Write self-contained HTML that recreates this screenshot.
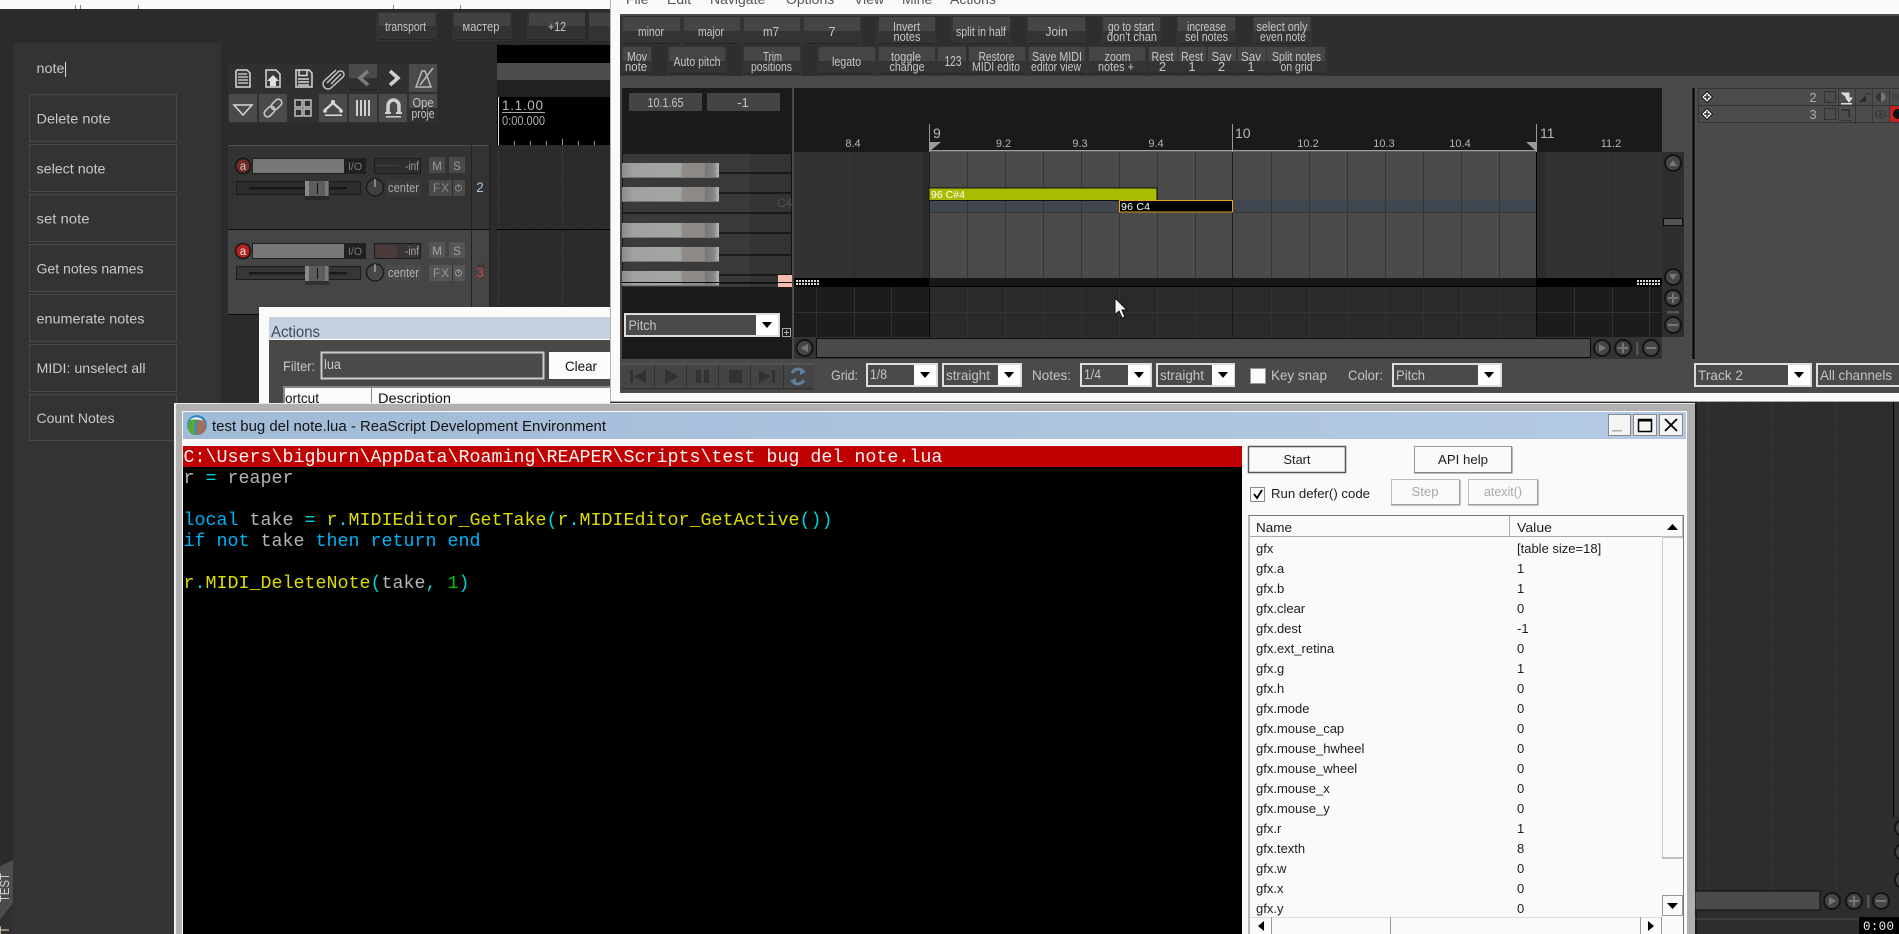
<!DOCTYPE html>
<html><head><meta charset="utf-8"><title>REAPER</title>
<style>
html,body{margin:0;padding:0;background:#2b2b2b;overflow:hidden}
svg{display:block;position:absolute;left:0;top:0}
text{font-family:"Liberation Sans",sans-serif;white-space:pre}
.l{font-size:14px;fill:#c9c9c9}
.b{font-size:13px;fill:#c6c6c6;text-anchor:middle}
.n{font-size:13px;fill:#1c1c1c}
.c{font-family:"Liberation Mono",monospace;font-size:18.33px}
.g{fill:#b4b4b4}.y{fill:#dcdc00}.k{fill:#00b0f4}.p{fill:#00d4d4}
.m{font-size:14px;fill:#c4c4c4}
.r{font-size:11px;fill:#b5b5b5;text-anchor:middle}
.t{font-size:11.5px;fill:#a9a9a9}
</style></head><body>
<svg width="1899" height="934" viewBox="0 0 1899 934" xmlns="http://www.w3.org/2000/svg">
<defs>
<linearGradient id="tb" x1="0" x2="1" y1="0" y2="0"><stop offset="0" stop-color="#a2bbd6"/><stop offset="1" stop-color="#b4cae4"/></linearGradient>
<linearGradient id="ky" x1="0" x2="1" y1="0" y2="0"><stop offset="0" stop-color="#8b8c8b"/><stop offset=".12" stop-color="#9fa29f"/><stop offset=".6" stop-color="#a3a5a3"/><stop offset=".63" stop-color="#8d8a88"/><stop offset=".85" stop-color="#8d8a88"/><stop offset=".86" stop-color="#777"/><stop offset=".95" stop-color="#888"/><stop offset="1" stop-color="#bbb"/></linearGradient>
<g id="ar"><rect width="22" height="20" fill="#fff"/><path d="M6 7h10l-5 6z" fill="#000"/></g>
<g id="rb"><circle r="8" fill="#464646" stroke="#141414" stroke-width="2"/></g>
<g id="kk"><rect width="97" height="15" fill="url(#ky)"/><rect y="14" width="97" height="1" fill="#777"/></g>
<g id="dm"><path d="M0 -5.5L5.5 0L0 5.5L-5.5 0z" fill="#fff" stroke="#111"/><path d="M-3 0H3M0 -3V3" stroke="#111" stroke-width="1.3"/></g>
</defs>

<!-- base -->
<rect width="1899" height="934" fill="#2b2b2b"/>
<rect width="610" height="9" fill="#fafafa"/>
<path d="M75.5 5V9M80.5 5V9M138.5 5V9M393.5 5V9M460.5 5V9" stroke="#888"/>

<!-- search panel -->
<rect x="13" y="43" width="208" height="891" fill="#343232"/>
<g fill="none" stroke="#484848">
<rect x="29.5" y="94.5" width="147" height="47"/><rect x="29.5" y="144.5" width="147" height="47"/><rect x="29.5" y="194.5" width="147" height="47"/><rect x="29.5" y="244.5" width="147" height="47"/><rect x="29.5" y="294.5" width="147" height="47"/><rect x="29.5" y="344.5" width="147" height="47"/><rect x="29.5" y="394.5" width="147" height="46"/>
</g>
<text class="l" x="36.5" y="73" textLength="28" lengthAdjust="spacingAndGlyphs">note</text>
<rect x="65" y="62" width="1" height="15" fill="#ddd"/>
<text class="l" x="36.5" y="123.5" textLength="74" lengthAdjust="spacingAndGlyphs">Delete note</text>
<text class="l" x="36.5" y="173.5" textLength="69" lengthAdjust="spacingAndGlyphs">select note</text>
<text class="l" x="36.5" y="223.5" textLength="53" lengthAdjust="spacingAndGlyphs">set note</text>
<text class="l" x="36.5" y="273.5" textLength="107" lengthAdjust="spacingAndGlyphs">Get notes names</text>
<text class="l" x="36.5" y="323.5" textLength="108" lengthAdjust="spacingAndGlyphs">enumerate notes</text>
<text class="l" x="36.5" y="373" textLength="109" lengthAdjust="spacingAndGlyphs">MIDI: unselect all</text>
<text class="l" x="36.5" y="423" textLength="78" lengthAdjust="spacingAndGlyphs">Count Notes</text>

<!-- TEST tab -->
<path d="M0 866L13 860V903L0 920z" fill="#4c4c4c"/>
<path d="M0 920L13 903V934H0z" fill="#2f2f2f"/>
<text transform="translate(9,902) rotate(-90)" font-size="13" fill="#cfcfcf" textLength="29" lengthAdjust="spacingAndGlyphs">TEST</text>
<text transform="translate(9,934) rotate(-90)" font-size="13" fill="#c8b8a8">T</text>

<!-- top buttons -->
<g>
<rect x="376" y="12" width="61" height="29" fill="#333"/><rect x="379" y="13" width="56" height="13" fill="#424242"/><rect x="379" y="39" width="56" height="1" fill="#252525"/>
<rect x="452" y="12" width="60" height="29" fill="#333"/><rect x="454" y="13" width="56" height="13" fill="#424242"/><rect x="454" y="39" width="56" height="1" fill="#252525"/>
<rect x="527" y="12" width="58" height="29" fill="#333"/><rect x="529" y="13" width="56" height="13" fill="#424242"/><rect x="529" y="39" width="56" height="1" fill="#252525"/>
<rect x="589" y="12" width="21" height="29" fill="#333"/><rect x="589" y="13" width="21" height="13" fill="#424242"/>
</g>
<text class="b" x="405.500" y="31" textLength="41" lengthAdjust="spacingAndGlyphs">transport</text>
<text class="b" x="481" y="31" textLength="37" lengthAdjust="spacingAndGlyphs" font-family="Liberation Sans">мастер</text>
<text class="b" x="557" y="31" textLength="18" lengthAdjust="spacingAndGlyphs">+12</text>

<!-- arrange top -->
<rect x="497" y="45" width="113" height="18" fill="#000"/>
<rect x="497" y="63" width="113" height="17" fill="#4c4c4c"/>
<rect x="497" y="80" width="113" height="17" fill="#212121"/>
<rect x="497" y="97" width="113" height="48" fill="#000"/>
<rect x="498" y="97" width="1" height="48" fill="#ddd"/>
<text x="502" y="110" font-size="13.500" fill="#b8b8b8" textLength="41" lengthAdjust="spacing">1.1.00</text>
<rect x="502" y="112" width="43" height="1" fill="#aaa"/>
<text x="502" y="125" font-size="12.500" fill="#b0b0b0" textLength="43" lengthAdjust="spacingAndGlyphs">0:00.000</text>
<path d="M514.500 141V145M530.500 141V145M546.500 141V145M562.500 139V145M578.500 141V145M594.500 141V145" stroke="#999"/>
<path d="M498.500 145V307M562.500 145V307" stroke="#4a4a4a" stroke-dasharray="1 2"/>
<path d="M514.500 145V307M530.500 145V307M546.500 145V307M578.500 145V307M594.500 145V307" stroke="#393939" stroke-dasharray="1 3"/>
<rect x="497" y="229" width="113" height="1" fill="#000"/>

<!-- toolbar -->
<rect x="228" y="63" width="210" height="60" fill="#303030"/>
<rect x="349" y="64" width="28" height="14" fill="#4a4a4a"/><rect x="349" y="89" width="28" height="1.500" fill="#242424"/>
<rect x="409" y="64" width="28" height="28" fill="#4a4a4a"/>
<rect x="229" y="94" width="28" height="28" fill="#4a4a4a"/><rect x="259" y="94" width="28" height="28" fill="#4a4a4a"/>
<rect x="319" y="94" width="28" height="28" fill="#4a4a4a"/><rect x="349" y="94" width="28" height="28" fill="#4a4a4a"/><rect x="379" y="94" width="28" height="28" fill="#4a4a4a"/>
<rect x="409" y="94" width="28" height="14" fill="#4a4a4a"/>
<g fill="none" stroke="#d8d8d8" stroke-width="1.500">
<path d="M237 70h10l3 3v14h-14V71z" fill="#3a3a3a"/><path d="M238 74h9M238 77h10M238 80h10M238 83h10" stroke-width="1.200"/>
<path d="M266 70h10l4 4v13h-14z" fill="#3a3a3a"/><path d="M273 75l6 6h-3v5h-6v-5h-3z" fill="#e0e0e0" stroke="none"/>
<path d="M296 70h13l3 3v14h-16z" fill="#3a3a3a"/><path d="M299 70.500v5h8v-5M298 79h11M298 82h11M298 85h11"/>
<path d="M327 83L338 72a3.500 3.500 0 0 1 5 5L331 88a5 5 0 0 1-7-7L336 70M331 84L341 74" stroke-width="1.400" stroke="#c8c8c8"/>
</g>
<path d="M368 71L360 78L368 85" fill="none" stroke="#7d7d7d" stroke-width="3.500"/>
<path d="M390 71L398 78L390 85" fill="none" stroke="#cfcfcf" stroke-width="3.500"/>
<path d="M416 87L422 71H425L431 87zM420 85L433 68" fill="none" stroke="#b8b8b8" stroke-width="1.500"/>
<path d="M234 105H252L243 115z" fill="none" stroke="#d8d8d8" stroke-width="1.500"/>
<g fill="none" stroke="#c8c8c8" stroke-width="1.600" transform="rotate(-45 273 108)"><rect x="262" y="104.500" width="12" height="7" rx="3.500"/><rect x="272" y="104.500" width="12" height="7" rx="3.500"/></g>
<g fill="none" stroke="#b8b8b8" stroke-width="1.600"><rect x="295" y="100" width="7" height="7"/><rect x="304" y="100" width="7" height="7"/><rect x="295" y="109" width="7" height="7"/><rect x="304" y="109" width="7" height="7"/></g>
<path d="M325 110L333 103L341 110" fill="none" stroke="#ddd" stroke-width="2.200"/><circle cx="333" cy="102" r="2" fill="#ddd"/><circle cx="325" cy="111" r="1.800" fill="#ddd"/><circle cx="341" cy="111" r="1.800" fill="#ddd"/><rect x="325" y="114.500" width="17" height="1.500" fill="#ddd"/>
<path d="M357 100v16M361 100v16M365 100v16M369 100v16" stroke="#cfcfcf" stroke-width="2"/>
<path d="M388 112V106a5.500 6 0 0 1 11 0V112" fill="none" stroke="#d0d0d0" stroke-width="3.500"/><rect x="385" y="112" width="6" height="2" fill="#ccc"/><rect x="396" y="112" width="6" height="2" fill="#ccc"/><rect x="386" y="116" width="15" height="1.500" fill="#ccc"/>
<text class="b" x="423" y="107" textLength="21" lengthAdjust="spacingAndGlyphs">Ope</text>
<text class="b" x="423" y="118" textLength="23" lengthAdjust="spacingAndGlyphs">proje</text>

<!-- track panel -->
<rect x="228" y="145" width="243" height="84" fill="#333"/>
<rect x="471" y="145" width="18" height="84" fill="#333"/>
<rect x="228" y="230" width="243" height="84" fill="#454545"/>
<rect x="471" y="230" width="18" height="84" fill="#454545"/>
<rect x="228" y="145" width="261" height="1" fill="#4f4f4f"/>
<rect x="228" y="229" width="261" height="1" fill="#0c0c0c"/>
<rect x="228" y="314" width="31" height="1" fill="#0c0c0c"/>
<rect x="471" y="145" width="1" height="169" fill="#222"/>
<rect x="489" y="145" width="1" height="169" fill="#222"/>
<rect x="477" y="263" width="8" height="6" fill="#3a3a3a" opacity=".7"/>

<g id="t2">
<rect x="252" y="158" width="114" height="16" fill="#202020"/><rect x="253" y="159" width="91" height="14" fill="#787878"/>
<circle cx="243" cy="166" r="7.500" fill="#6b2d26" stroke="#141414" stroke-width="1.500"/><text x="243" y="170" font-size="11.500" fill="#d8c0b8" text-anchor="middle">a</text>
<text x="355" y="170" font-size="11" fill="#7c7c7c" text-anchor="middle" textLength="14" lengthAdjust="spacingAndGlyphs">I/O</text>
<rect x="374.500" y="158.500" width="46" height="15" fill="#2d2d2d" stroke="#1d1d1d"/><rect x="376" y="165" width="23" height="1" fill="#3f3f3f"/>
<text x="419" y="170" font-size="11.500" fill="#9c9c9c" text-anchor="end" textLength="14" lengthAdjust="spacingAndGlyphs">-inf</text>
<rect x="429" y="157" width="16" height="16" fill="#494949"/><rect x="449" y="157" width="16" height="16" fill="#494949"/>
<text x="437" y="170" font-size="11.500" fill="#999" text-anchor="middle">M</text><text x="457" y="170" font-size="11.500" fill="#999" text-anchor="middle">S</text>
<rect x="236.500" y="181.500" width="124" height="13" fill="#2c2c2c" stroke="#1c1c1c"/><rect x="249" y="187" width="98" height="2.500" fill="#171717"/>
<rect x="305" y="196" width="24" height="4" fill="#1d1d1d" opacity=".5"/>
<rect x="305" y="181" width="24" height="15" fill="#5c5c5c"/><rect x="305" y="181" width="4" height="15" fill="#8a8a8a"/><rect x="325" y="181" width="3" height="15" fill="#7a7a7a"/><rect x="317" y="183" width="1" height="11" fill="#111"/>
<circle cx="375" cy="187.500" r="8.500" fill="#404040" stroke="#1c1c1c" stroke-width="1.500"/><rect x="374.500" y="179" width="1" height="8" fill="#ccc"/>
<rect x="386" y="180" width="35" height="16" fill="#393939"/>
<text x="388" y="192" font-size="13" fill="#a9a9a9" textLength="31" lengthAdjust="spacingAndGlyphs">center</text>
<rect x="429" y="180" width="36" height="16" fill="#494949"/><rect x="452" y="180" width="1" height="16" fill="#2a2a2a"/>
<text x="441" y="192" font-size="11.500" fill="#8c8c8c" text-anchor="middle" textLength="16">FX</text><circle cx="458.500" cy="188" r="3" fill="none" stroke="#888"/><rect x="458" y="184" width="1" height="4" fill="#888"/>
</g>
<text x="480" y="192" font-size="13.500" fill="#a8c4de" text-anchor="middle">2</text>

<g transform="translate(0,85)">
<rect x="252" y="158" width="114" height="16" fill="#202020"/><rect x="253" y="159" width="91" height="14" fill="#787878"/>
<circle cx="243" cy="166" r="7.500" fill="#b32222" stroke="#141414" stroke-width="1.500"/><text x="243" y="170" font-size="11.500" fill="#f0e0e0" text-anchor="middle">a</text>
<text x="355" y="170" font-size="11" fill="#7c7c7c" text-anchor="middle" textLength="14" lengthAdjust="spacingAndGlyphs">I/O</text>
<rect x="374.500" y="158.500" width="46" height="15" fill="#3a3535" stroke="#1d1d1d"/><rect x="375" y="160" width="22" height="13" fill="#4a3a3a"/>
<text x="419" y="170" font-size="11.500" fill="#a4a4a4" text-anchor="end" textLength="14" lengthAdjust="spacingAndGlyphs">-inf</text>
<rect x="429" y="157" width="16" height="16" fill="#555"/><rect x="449" y="157" width="16" height="16" fill="#555"/>
<text x="437" y="170" font-size="11.500" fill="#a4a4a4" text-anchor="middle">M</text><text x="457" y="170" font-size="11.500" fill="#a4a4a4" text-anchor="middle">S</text>
<rect x="236.500" y="181.500" width="124" height="13" fill="#363636" stroke="#1c1c1c"/><rect x="249" y="187" width="98" height="2.500" fill="#1a1a1a"/>
<rect x="305" y="196" width="24" height="4" fill="#1d1d1d" opacity=".5"/>
<rect x="305" y="181" width="24" height="15" fill="#5c5c5c"/><rect x="305" y="181" width="4" height="15" fill="#8a8a8a"/><rect x="325" y="181" width="3" height="15" fill="#7a7a7a"/><rect x="317" y="183" width="1" height="11" fill="#111"/>
<circle cx="375" cy="187.500" r="8.500" fill="#484848" stroke="#1c1c1c" stroke-width="1.500"/><rect x="374.500" y="179" width="1" height="8" fill="#ccc"/>
<rect x="386" y="180" width="35" height="16" fill="#4a4a4a"/>
<text x="388" y="192" font-size="13" fill="#b0b0b0" textLength="31" lengthAdjust="spacingAndGlyphs">center</text>
<rect x="429" y="180" width="36" height="16" fill="#555"/><rect x="452" y="180" width="1" height="16" fill="#333"/>
<text x="441" y="192" font-size="11.500" fill="#999" text-anchor="middle" textLength="16">FX</text><circle cx="458.500" cy="188" r="3" fill="none" stroke="#999"/><rect x="458" y="184" width="1" height="4" fill="#999"/>
</g>
<text x="480" y="277" font-size="13.500" fill="#d83a3a" text-anchor="middle">3</text>

<!-- Actions window -->
<rect x="259" y="307" width="351" height="96" fill="#fbfbfb"/>
<rect x="269" y="317" width="341" height="22" fill="#c4d2e0"/>
<rect x="269" y="340" width="341" height="63" fill="#484848"/>
<text x="271" y="337" font-size="16" fill="#3c4a5c" textLength="49" lengthAdjust="spacingAndGlyphs">Actions</text>
<text x="283" y="371" font-size="14" fill="#c8c8c8" textLength="32" lengthAdjust="spacingAndGlyphs">Filter:</text>
<rect x="321.500" y="352.500" width="222" height="26" fill="#4a4a4a" stroke="#ccc" stroke-width="2"/>
<text x="324" y="369" font-size="13.500" fill="#c8c8c8" textLength="17" lengthAdjust="spacingAndGlyphs">lua</text>
<rect x="549" y="352" width="61" height="27" fill="#fbfbfb"/>
<text x="581" y="371" font-size="14" fill="#111" text-anchor="middle" textLength="32" lengthAdjust="spacingAndGlyphs">Clear</text>
<rect x="283" y="386" width="327" height="17" fill="#888"/>
<rect x="285" y="388" width="325" height="15" fill="#fbfbfb"/>
<rect x="371" y="388" width="1" height="15" fill="#888"/>
<text x="285" y="403" font-size="14" fill="#111" textLength="34" lengthAdjust="spacingAndGlyphs">ortcut</text>
<text x="378" y="403" font-size="14" fill="#111" textLength="73" lengthAdjust="spacingAndGlyphs">Description</text>

<!-- MIDI editor window -->
<rect x="610" y="0" width="1289" height="402" fill="#fafafa"/>
<rect x="610" y="0" width="1" height="402" fill="#b5b5b5"/>
<rect x="610" y="401" width="1289" height="1" fill="#aaa"/>
<g font-size="14" fill="#555">
<text x="626" y="4">File</text><text x="667" y="4">Edit</text><text x="710" y="4">Navigate</text><text x="786" y="4">Options</text><text x="854" y="4">View</text><text x="902" y="4">Mine</text><text x="950" y="4">Actions</text>
</g>
<rect x="620" y="14" width="1279" height="379" fill="#4a4a4a"/>
<rect x="620" y="16" width="1279" height="60" fill="#2e2e2e"/>

<!-- toolbar buttons -->
<g fill="#343434">
<rect x="621" y="17" width="61" height="28"/><rect x="682" y="17" width="60" height="28"/><rect x="742" y="17" width="60" height="28"/><rect x="802" y="17" width="60" height="28"/><rect x="876" y="17" width="60" height="28"/><rect x="951" y="17" width="60" height="28"/><rect x="1026" y="17" width="60" height="28"/><rect x="1101" y="17" width="60" height="28"/><rect x="1176" y="17" width="60" height="28"/><rect x="1252" y="17" width="60" height="28"/>
<rect x="621" y="46" width="31" height="30"/><rect x="667" y="46" width="60" height="30"/><rect x="742" y="46" width="60" height="30"/><rect x="817" y="46" width="60" height="30"/><rect x="877" y="46" width="60" height="30"/><rect x="937" y="46" width="30" height="30"/><rect x="968" y="46" width="59" height="30"/><rect x="1027" y="46" width="60" height="30"/><rect x="1087" y="46" width="60" height="30"/><rect x="1148" y="46" width="30" height="30"/><rect x="1178" y="46" width="30" height="30"/><rect x="1208" y="46" width="30" height="30"/><rect x="1238" y="46" width="30" height="30"/><rect x="1268" y="46" width="59" height="30"/>
</g>
<g fill="#454545">
<rect x="623" y="17" width="57" height="14"/><rect x="684" y="17" width="56" height="14"/><rect x="744" y="17" width="56" height="14"/><rect x="804" y="17" width="56" height="14"/><rect x="879" y="17" width="56" height="14"/><rect x="953" y="17" width="57" height="14"/><rect x="1028" y="17" width="57" height="14"/><rect x="1103" y="17" width="57" height="14"/><rect x="1178" y="17" width="57" height="14"/><rect x="1254" y="17" width="56" height="14"/>
<rect x="623" y="47" width="28" height="14"/><rect x="669" y="47" width="56" height="14"/><rect x="744" y="47" width="56" height="14"/><rect x="819" y="47" width="56" height="14"/><rect x="879" y="47" width="56" height="14"/><rect x="938" y="47" width="28" height="14"/><rect x="969" y="47" width="56" height="14"/><rect x="1029" y="47" width="56" height="14"/><rect x="1089" y="47" width="56" height="14"/><rect x="1149" y="47" width="28" height="14"/><rect x="1178" y="47" width="28" height="14"/><rect x="1208" y="47" width="28" height="14"/><rect x="1238" y="47" width="28" height="14"/><rect x="1267" y="47" width="58" height="14"/>
</g>
<g fill="#242424">
<rect x="623" y="43" width="57" height="1"/><rect x="684" y="43" width="56" height="1"/><rect x="744" y="43" width="56" height="1"/><rect x="804" y="43" width="56" height="1"/><rect x="879" y="43" width="56" height="1"/><rect x="953" y="43" width="57" height="1"/><rect x="1028" y="43" width="57" height="1"/><rect x="1103" y="43" width="57" height="1"/><rect x="1178" y="43" width="57" height="1"/><rect x="1254" y="43" width="56" height="1"/>
<rect x="623" y="73" width="28" height="1"/><rect x="669" y="73" width="56" height="1"/><rect x="744" y="73" width="56" height="1"/><rect x="819" y="73" width="56" height="1"/><rect x="879" y="73" width="56" height="1"/><rect x="938" y="73" width="28" height="1"/><rect x="969" y="73" width="56" height="1"/><rect x="1029" y="73" width="56" height="1"/><rect x="1089" y="73" width="56" height="1"/><rect x="1149" y="73" width="28" height="1"/><rect x="1178" y="73" width="28" height="1"/><rect x="1208" y="73" width="28" height="1"/><rect x="1238" y="73" width="28" height="1"/><rect x="1267" y="73" width="58" height="1"/>
</g>
<text class="b" x="651" y="36" textLength="26" lengthAdjust="spacingAndGlyphs">minor</text>
<text class="b" x="711" y="36" textLength="26" lengthAdjust="spacingAndGlyphs">major</text>
<text class="b" x="771" y="36" textLength="16" lengthAdjust="spacingAndGlyphs">m7</text>
<text class="b" x="832" y="36">7</text>
<text class="b" x="906.500" y="31" textLength="27" lengthAdjust="spacingAndGlyphs">Invert</text>
<text class="b" x="907" y="41" textLength="27" lengthAdjust="spacingAndGlyphs">notes</text>
<text class="b" x="981" y="36" textLength="50" lengthAdjust="spacingAndGlyphs">split in half</text>
<text class="b" x="1056.500" y="36" textLength="22" lengthAdjust="spacingAndGlyphs">Join</text>
<text class="b" x="1131" y="31" textLength="46" lengthAdjust="spacingAndGlyphs">go to start</text>
<text class="b" x="1132" y="41" textLength="50" lengthAdjust="spacingAndGlyphs">don't chan</text>
<text class="b" x="1206.500" y="31" textLength="39" lengthAdjust="spacingAndGlyphs">increase</text>
<text class="b" x="1206.500" y="41" textLength="43" lengthAdjust="spacingAndGlyphs">sel notes</text>
<text class="b" x="1282" y="31" textLength="51" lengthAdjust="spacingAndGlyphs">select only</text>
<text class="b" x="1283" y="41" textLength="46" lengthAdjust="spacingAndGlyphs">even note</text>
<text class="b" x="637" y="61" textLength="20" lengthAdjust="spacingAndGlyphs">Mov</text>
<text class="b" x="636" y="71" textLength="22" lengthAdjust="spacingAndGlyphs">note</text>
<text class="b" x="697" y="66" textLength="47" lengthAdjust="spacingAndGlyphs">Auto pitch</text>
<text class="b" x="772.500" y="61" textLength="19" lengthAdjust="spacingAndGlyphs">Trim</text>
<text class="b" x="771.500" y="71" textLength="41" lengthAdjust="spacingAndGlyphs">positions</text>
<text class="b" x="846.500" y="66" textLength="29" lengthAdjust="spacingAndGlyphs">legato</text>
<text class="b" x="906" y="61" textLength="30" lengthAdjust="spacingAndGlyphs">toggle</text>
<text class="b" x="907" y="71" textLength="35" lengthAdjust="spacingAndGlyphs">change</text>
<text class="b" x="953" y="66" style="font-size:14.500px" textLength="17" lengthAdjust="spacingAndGlyphs">123</text>
<text class="b" x="996.500" y="61" textLength="36" lengthAdjust="spacingAndGlyphs">Restore</text>
<text class="b" x="996" y="71" textLength="48" lengthAdjust="spacingAndGlyphs">MIDI edito</text>
<text class="b" x="1057" y="61" textLength="50" lengthAdjust="spacingAndGlyphs">Save MIDI</text>
<text class="b" x="1056" y="71" textLength="50" lengthAdjust="spacingAndGlyphs">editor view</text>
<text class="b" x="1117.500" y="61" textLength="26" lengthAdjust="spacingAndGlyphs">zoom</text>
<text class="b" x="1116" y="71" textLength="36" lengthAdjust="spacingAndGlyphs">notes +</text>
<text class="b" x="1162.500" y="61" textLength="22" lengthAdjust="spacingAndGlyphs">Rest</text><text class="b" x="1162.500" y="71">2</text>
<text class="b" x="1192" y="61" textLength="22" lengthAdjust="spacingAndGlyphs">Rest</text><text class="b" x="1192" y="71">1</text>
<text class="b" x="1221.500" y="61" textLength="20" lengthAdjust="spacingAndGlyphs">Sav</text><text class="b" x="1221.500" y="71">2</text>
<text class="b" x="1251" y="61" textLength="20" lengthAdjust="spacingAndGlyphs">Sav</text><text class="b" x="1251" y="71">1</text>
<text class="b" x="1296.500" y="61" textLength="49" lengthAdjust="spacingAndGlyphs">Split notes</text>
<text class="b" x="1296.500" y="71" textLength="32" lengthAdjust="spacingAndGlyphs">on grid</text>

<!-- left panel -->
<rect x="622" y="88" width="170" height="271" fill="#1a1a1a"/>
<rect x="629" y="93" width="73" height="18" fill="#444"/><rect x="707" y="93" width="73" height="18" fill="#444"/>
<text x="665.500" y="107" font-size="13" fill="#c4c4c4" text-anchor="middle" textLength="36" lengthAdjust="spacingAndGlyphs">10.1.65</text>
<text x="743" y="107" font-size="13" fill="#c4c4c4" text-anchor="middle">-1</text>

<!-- piano -->
<rect x="622" y="152" width="170" height="135" fill="#3a3a3a"/>
<rect x="750" y="152" width="42" height="135" fill="#333"/>
<path d="M622 153H792M622 173H792M622 193H792M622 213H792M622 233H792M622 255H792M622 275H792M622 283H792" stroke="#0a0a0a" stroke-width="1.200"/>
<rect x="622" y="152" width="1" height="135" fill="#111"/><rect x="791" y="152" width="1" height="135" fill="#111"/>
<use href="#kk" x="622" y="163"/><use href="#kk" x="622" y="187"/><use href="#kk" x="622" y="223"/><use href="#kk" x="622" y="247"/><use href="#kk" x="622" y="271"/>
<rect x="622" y="282" width="170" height="1" fill="#0a0a0a"/>
<text x="777" y="207" font-size="12" fill="#505050">C4</text>
<rect x="778" y="275" width="14" height="12" fill="#f5bdb0"/><rect x="778" y="282" width="14" height="1" fill="#111"/>

<!-- ruler -->
<rect x="794" y="88" width="868" height="64" fill="#1a1a1a"/>
<rect x="929" y="150" width="607" height="1.500" fill="#a0a0a0"/>
<path d="M929.500 124V152M1232.500 124V152M1536.500 124V152" stroke="#9a9a9a"/>
<path d="M930 142H941L930 151z" fill="#9a9a9a"/><path d="M1526 142H1536V151z" fill="#9a9a9a"/>
<text x="933" y="138" font-size="14" fill="#b8b8b8">9</text><text x="1235" y="138" font-size="14" fill="#b8b8b8">10</text><text x="1540" y="138" font-size="14" fill="#b8b8b8">11</text>
<text class="r" x="853" y="147">8.4</text><text class="r" x="1003.500" y="147">9.2</text><text class="r" x="1080" y="147">9.3</text><text class="r" x="1156" y="147">9.4</text><text class="r" x="1308" y="147">10.2</text><text class="r" x="1384" y="147">10.3</text><text class="r" x="1460" y="147">10.4</text><text class="r" x="1611" y="147">11.2</text>

<!-- piano roll -->
<rect x="794" y="152" width="135" height="126" fill="#323232"/><rect x="922" y="152" width="7" height="126" fill="#2a2a2a"/>
<rect x="929" y="152" width="607" height="126" fill="#4a4a4a"/>
<rect x="1536" y="152" width="126" height="126" fill="#323232"/><rect x="1537" y="152" width="8" height="126" fill="#2c2c2c"/>
<rect x="929" y="200" width="607" height="12" fill="#3f4650"/>
<rect x="929" y="212" width="607" height="1" fill="#373737"/>
<path d="M854.500 152V278M1612.500 152V278" stroke="#292929"/>
<path d="M967.500 152V278M1005.500 152V278M1043.500 152V278M1081.500 152V278M1119.500 152V278M1157.500 152V278M1195.500 152V278M1271.500 152V278M1309.500 152V278M1347.500 152V278M1385.500 152V278M1423.500 152V278M1461.500 152V278M1499.500 152V278" stroke="#353535"/>
<path d="M929.500 152V278M1232.500 152V278" stroke="#1c1c1c"/>
<path d="M1536.500 152V278" stroke="#000"/>
<rect x="929" y="188" width="228" height="12.500" fill="#a8bc00" stroke="#111"/>
<text x="931" y="198" font-size="10.500" fill="#fff" textLength="34" lengthAdjust="spacing">96 C#4</text>
<rect x="1119.500" y="200.500" width="113" height="11.500" fill="#000" stroke="#e8a030"/>
<text x="1121" y="210" font-size="10.500" fill="#fff" textLength="29" lengthAdjust="spacing">96 C4</text>

<!-- band -->
<rect x="794" y="278" width="135" height="9" fill="#000"/>
<rect x="929" y="278" width="607" height="9" fill="#181818"/>
<rect x="929" y="286" width="607" height="1" fill="#000"/>
<rect x="1536" y="278" width="126" height="9" fill="#000"/>
<path d="M796 281H820M796 284H820" stroke="#ddd" stroke-width="2" stroke-dasharray="2 1"/>
<path d="M1637 281H1661M1637 284H1661" stroke="#ddd" stroke-width="2" stroke-dasharray="2 1"/>

<!-- CC lane -->
<rect x="794" y="287" width="135" height="50" fill="#1c1c1c"/>
<rect x="929" y="287" width="607" height="50" fill="#2a2a2a"/>
<rect x="1536" y="287" width="126" height="50" fill="#1c1c1c"/>
<path d="M816.500 287V337M854.500 287V337M891.500 287V337M1574.500 287V337M1612.500 287V337M1649.500 287V337" stroke="#303030"/>
<path d="M967.500 287V337M1005.500 287V337M1043.500 287V337M1081.500 287V337M1119.500 287V337M1157.500 287V337M1195.500 287V337M1271.500 287V337M1309.500 287V337M1347.500 287V337M1385.500 287V337M1423.500 287V337M1461.500 287V337M1499.500 287V337" stroke="#323232"/>
<path d="M794 312.500H929M1536 312.500H1662" stroke="#303030"/><path d="M929 312.500H1536" stroke="#323232"/>
<path d="M929.500 287V337M1536.500 287V337" stroke="#080808"/>
<path d="M1232.500 287V337" stroke="#161616"/>

<!-- vertical scroll col -->
<rect x="1662" y="152" width="22" height="185" fill="#2e2e2e"/>
<use href="#rb" x="1673" y="163"/><path d="M1669 166L1673 160L1677 166z" fill="#777"/>
<rect x="1663.500" y="218.500" width="19" height="7" fill="#555" stroke="#0c0c0c"/>
<use href="#rb" x="1673" y="277"/><path d="M1669 274H1677L1673 280z" fill="#777"/>
<use href="#rb" x="1673" y="298"/><path d="M1668 298H1678M1673 293V303" stroke="#777" stroke-width="2"/>
<rect x="1667" y="311" width="12" height="2.500" fill="#555"/>
<use href="#rb" x="1673" y="325"/><path d="M1668 325H1678" stroke="#777" stroke-width="2"/>

<!-- hscroll row -->
<rect x="794" y="337" width="868" height="22" fill="#333"/>
<use href="#rb" x="804.500" y="348"/><path d="M808 344V352L801 348z" fill="#777"/>
<rect x="816.500" y="338.500" width="774" height="19" fill="#4a4a4a" stroke="#0c0c0c"/>
<use href="#rb" x="1602" y="348"/><path d="M1599 344V352L1606 348z" fill="#777"/>
<use href="#rb" x="1623" y="348"/><path d="M1618 348H1628M1623 343V353" stroke="#777" stroke-width="2"/>
<rect x="1636" y="342" width="2.500" height="13" fill="#555"/>
<use href="#rb" x="1651" y="348"/><path d="M1646 348H1656" stroke="#777" stroke-width="2"/>

<!-- Pitch combo -->
<rect x="625" y="314" width="154" height="22" fill="#4a4a4a" stroke="#ddd" stroke-width="2"/>
<use href="#ar" x="756" y="315"/>
<text class="m" x="628.500" y="330" textLength="28" lengthAdjust="spacingAndGlyphs">Pitch</text>
<rect x="782.500" y="328.500" width="8" height="8" fill="none" stroke="#aaa"/><path d="M784 332.500H789M786.500 330V335" stroke="#aaa"/>

<!-- right panel -->
<rect x="1692.500" y="88" width="2" height="271" fill="#000"/>
<rect x="1698.500" y="88.500" width="201" height="17" fill="#4c4c4c" stroke="#333"/>
<rect x="1698.500" y="105.500" width="201" height="17" fill="#4c4c4c" stroke="#333"/>
<use href="#dm" x="1707" y="97"/><use href="#dm" x="1707" y="114"/>
<text x="1813" y="102" font-size="13" fill="#aaa" text-anchor="middle">2</text><text x="1813" y="119" font-size="13" fill="#aaa" text-anchor="middle">3</text>
<rect x="1824.500" y="91.500" width="11" height="11" fill="none" stroke="#333"/><rect x="1824.500" y="108.500" width="11" height="11" fill="none" stroke="#333"/>
<path d="M1838.500 88V122M1855.500 88V122M1872.500 88V122M1889.500 88V122" stroke="#383838"/>
<path d="M1841 93H1849V100M1846 98H1852L1849 102z" fill="#ddd" stroke="#ddd"/><rect x="1841" y="103" width="11" height="1.500" fill="#ddd"/>
<path d="M1841 110H1849V117" fill="none" stroke="#333" stroke-width="2"/><rect x="1841" y="120" width="11" height="1" fill="#333"/>
<path d="M1859 102L1866 95V102z" fill="#2a2a2a"/><path d="M1866 95a3 3 0 0 1 5 0" fill="none" stroke="#333"/>
<circle cx="1880.500" cy="97" r="4.500" fill="#333"/><path d="M1881 92.500a4.500 4.500 0 0 1 0 9z" fill="#777"/>
<ellipse cx="1880.500" cy="114" rx="5" ry="3.500" fill="none" stroke="#333"/><circle cx="1880.500" cy="114" r="1.500" fill="#333"/>
<circle cx="1895" cy="97" r="4" fill="#444"/>
<rect x="1890" y="106" width="9" height="16" fill="#c42222"/><circle cx="1898" cy="114" r="5" fill="#111"/>

<!-- bottom bar -->
<rect x="622" y="363" width="192" height="26" rx="2" fill="#444"/>
<rect x="622" y="363" width="192" height="2" fill="#555"/><rect x="622" y="388" width="192" height="1.500" fill="#333"/>
<path d="M654.500 364V389M686.500 364V389M718.500 364V389M750.500 364V389M783.500 364V389" stroke="#333"/>
<g fill="#323232">
<rect x="630" y="370" width="3" height="13"/><path d="M646 370V383L634 376.500z"/>
<path d="M665 369V384L679 376.500z"/>
<rect x="696" y="370" width="5" height="13"/><rect x="704" y="370" width="5" height="13"/>
<rect x="729" y="370" width="13" height="13"/>
<path d="M759 370V383L771 376.500z"/><rect x="772" y="370" width="3" height="13"/>
</g>
<path d="M792 373a7 7 0 0 1 11-2M804 380a7 7 0 0 1-11 2" fill="none" stroke="#5e7f9c" stroke-width="3"/><path d="M800 368L806 372L800 375zM796 378L790 381L796 385z" fill="#5e7f9c"/>

<text class="m" x="831" y="380" textLength="27" lengthAdjust="spacingAndGlyphs">Grid:</text>
<rect x="867" y="364" width="70" height="22" fill="#4a4a4a" stroke="#ddd" stroke-width="2"/><use href="#ar" x="914" y="365"/>
<text class="m" x="870" y="379" textLength="17" lengthAdjust="spacingAndGlyphs">1/8</text>
<rect x="943" y="364" width="78" height="22" fill="#4a4a4a" stroke="#ddd" stroke-width="2"/><use href="#ar" x="998" y="365"/>
<text class="m" x="946" y="380" textLength="44" lengthAdjust="spacingAndGlyphs">straight</text>
<text class="m" x="1032" y="380" textLength="39" lengthAdjust="spacingAndGlyphs">Notes:</text>
<rect x="1081" y="364" width="70" height="22" fill="#4a4a4a" stroke="#ddd" stroke-width="2"/><use href="#ar" x="1128" y="365"/>
<text class="m" x="1084" y="379" textLength="17" lengthAdjust="spacingAndGlyphs">1/4</text>
<rect x="1157" y="364" width="77" height="22" fill="#4a4a4a" stroke="#ddd" stroke-width="2"/><use href="#ar" x="1212" y="365"/>
<text class="m" x="1160" y="380" textLength="44" lengthAdjust="spacingAndGlyphs">straight</text>
<rect x="1250.500" y="368.500" width="15" height="15" fill="#fafafa" stroke="#999"/>
<text class="m" x="1271" y="380" textLength="56" lengthAdjust="spacingAndGlyphs">Key snap</text>
<text class="m" x="1348" y="380" textLength="35" lengthAdjust="spacingAndGlyphs">Color:</text>
<rect x="1393" y="364" width="108" height="22" fill="#4a4a4a" stroke="#ddd" stroke-width="2"/><use href="#ar" x="1478" y="365"/>
<text class="m" x="1396" y="380" textLength="29" lengthAdjust="spacingAndGlyphs">Pitch</text>
<rect x="1695" y="364" width="116" height="22" fill="#4a4a4a" stroke="#ddd" stroke-width="2"/><use href="#ar" x="1788" y="365"/>
<text class="m" x="1698" y="380" textLength="45" lengthAdjust="spacingAndGlyphs">Track 2</text>
<rect x="1817" y="364" width="90" height="22" fill="#4a4a4a" stroke="#ddd" stroke-width="2"/>
<text class="m" x="1820" y="380" textLength="72" lengthAdjust="spacingAndGlyphs">All channels</text>

<!-- lower right arrange -->
<rect x="1695" y="402" width="204" height="532" fill="#2d2d2d"/>
<rect x="1695" y="402" width="2" height="532" fill="#1c1c1c"/>
<path d="M1707.500 402V890M1772.500 402V890M1836.500 402V890" stroke="#464646" stroke-dasharray="1 2"/>
<path d="M1724.500 402V890M1740.500 402V890M1756.500 402V890M1788.500 402V890M1804.500 402V890" stroke="#383838" stroke-dasharray="1 3"/>
<rect x="1695" y="891" width="125" height="19" fill="#4a4a4a" stroke="#0c0c0c"/>
<use href="#rb" x="1832" y="901"/><path d="M1829 897V905L1836 901z" fill="#777"/>
<use href="#rb" x="1854" y="901"/><path d="M1849 901H1859M1854 896V906" stroke="#777" stroke-width="2"/>
<rect x="1867" y="895" width="2.500" height="13" fill="#555"/>
<use href="#rb" x="1881" y="901"/><path d="M1876 901H1886" stroke="#777" stroke-width="2"/>
<rect x="1695" y="918.500" width="164" height="1" fill="#4a4a4a"/>
<rect x="1859" y="917" width="40" height="17" fill="#000"/>
<text x="1863" y="930" font-size="12.500" fill="#eee" textLength="31" lengthAdjust="spacing" style="font-family:'Liberation Mono',monospace">0:00</text>
<rect x="1893" y="402" width="6" height="415" fill="#333"/><rect x="1893" y="402" width="1" height="415" fill="#000"/>
<use href="#rb" x="1903" y="828"/><use href="#rb" x="1903" y="852"/><use href="#rb" x="1903" y="880"/>

<!-- ReaScript window -->
<rect x="174" y="403" width="1521" height="531" fill="#b0b0b0"/>
<rect x="174" y="403" width="1521" height="1" fill="#e8e8e8"/>
<rect x="174" y="403" width="2" height="531" fill="#f0f0f0"/>
<rect x="182" y="411" width="1505" height="523" fill="#fafafa"/>
<rect x="183" y="412" width="1503" height="27" fill="url(#tb)"/>
<circle cx="197" cy="425" r="10" fill="#2b8fcf"/>
<path d="M197 417C191 417 188 422 188 427C188 431 191 435 195 435C194 430 194 424 197 417z" fill="#5aa832"/>
<path d="M199 418C196 424 196 430 197 435C203 435 206 431 206 426C206 422 203 418 199 418z" fill="#a0705a"/>
<path d="M190 420C194 416 201 417 203 421C200 419 194 419 190 420z" fill="#fff"/>
<text x="212" y="431" font-size="15" fill="#141414" textLength="394" lengthAdjust="spacingAndGlyphs">test bug del note.lua - ReaScript Development Environment</text>
<g>
<rect x="1608.500" y="414.500" width="22" height="21" fill="#f4f4f4" stroke="#888"/><rect x="1612" y="430" width="10" height="1.500" fill="#aaa"/>
<rect x="1633.500" y="414.500" width="23" height="21" fill="#f4f4f4" stroke="#888"/><rect x="1638.500" y="419.500" width="13" height="12" fill="none" stroke="#000" stroke-width="1.500"/><rect x="1638" y="419" width="14" height="2.500" fill="#000"/>
<rect x="1659.500" y="414.500" width="23" height="21" fill="#f4f4f4" stroke="#888"/><path d="M1665 419L1677 431M1677 419L1665 431" stroke="#000" stroke-width="1.800"/>
</g>

<!-- code -->
<rect x="183" y="446" width="1059" height="488" fill="#000"/>
<rect x="183" y="446" width="1059" height="21" fill="#c00000"/>
<text class="c" x="183.500" y="462" fill="#f4f4f4">C:\Users\bigburn\AppData\Roaming\REAPER\Scripts\test bug del note.lua</text>
<text class="c" x="183.500" y="483"><tspan class="g">r </tspan><tspan class="p">=</tspan><tspan class="g"> reaper</tspan></text>
<text class="c" x="183.500" y="525"><tspan class="k">local</tspan><tspan class="g"> take </tspan><tspan class="p">=</tspan><tspan class="y"> r</tspan><tspan class="p">.</tspan><tspan class="y">MIDIEditor_GetTake</tspan><tspan class="p">(</tspan><tspan class="y">r</tspan><tspan class="p">.</tspan><tspan class="y">MIDIEditor_GetActive</tspan><tspan class="p">())</tspan></text>
<text class="c" x="183.500" y="546"><tspan class="k">if not</tspan><tspan class="g"> take </tspan><tspan class="k">then return end</tspan></text>
<text class="c" x="183.500" y="588"><tspan class="y">r</tspan><tspan class="p">.</tspan><tspan class="y">MIDI_DeleteNote</tspan><tspan class="p">(</tspan><tspan class="g">take</tspan><tspan class="p">,</tspan><tspan fill="#00c800"> 1</tspan><tspan class="p">)</tspan></text>

<!-- right controls -->
<rect x="1248.500" y="446.500" width="97" height="26" fill="#fafafa" stroke="#555" stroke-width="1.500"/>
<text class="n" x="1297" y="464" text-anchor="middle" textLength="27" lengthAdjust="spacingAndGlyphs">Start</text>
<rect x="1414.500" y="446.500" width="97" height="26" fill="#fafafa" stroke="#999"/><path d="M1512 447V473H1414" fill="none" stroke="#777"/>
<text class="n" x="1463" y="464" text-anchor="middle" textLength="50" lengthAdjust="spacingAndGlyphs">API help</text>
<rect x="1250.500" y="487.500" width="14" height="14" fill="#fafafa" stroke="#888"/><path d="M1254 494L1257 498L1262 490" fill="none" stroke="#000" stroke-width="1.800"/>
<text class="n" x="1271" y="498" textLength="99" lengthAdjust="spacingAndGlyphs">Run defer() code</text>
<rect x="1391.500" y="479.500" width="68" height="25" fill="#fafafa" stroke="#bbb"/><path d="M1460 480V505H1391" fill="none" stroke="#888"/>
<text class="n" x="1425" y="496" text-anchor="middle" style="fill:#a8a8a8" textLength="27" lengthAdjust="spacingAndGlyphs">Step</text>
<rect x="1468.500" y="479.500" width="69" height="25" fill="#fafafa" stroke="#bbb"/><path d="M1538 480V505H1468" fill="none" stroke="#888"/>
<text class="n" x="1503" y="496" text-anchor="middle" style="fill:#a8a8a8" textLength="38" lengthAdjust="spacingAndGlyphs">atexit()</text>

<!-- list -->
<rect x="1249" y="515.500" width="434.500" height="419" fill="#fafafa" stroke="#777"/>
<rect x="1250" y="536" width="412" height="1" fill="#aaa"/>
<rect x="1509" y="516" width="1" height="20" fill="#aaa"/>
<text class="n" x="1256" y="532" textLength="36" lengthAdjust="spacingAndGlyphs">Name</text>
<text class="n" x="1517" y="532" textLength="35" lengthAdjust="spacingAndGlyphs">Value</text>
<rect x="1662" y="516" width="21" height="21" fill="#fafafa"/><path d="M1662 537H1683V516" fill="none" stroke="#888"/>
<path d="M1667 530L1672.500 524L1678 530z" fill="#000"/>
<path d="M1662.500 537V858H1683" fill="none" stroke="#ccc"/><path d="M1662 858H1684" stroke="#888"/>
<rect x="1662.500" y="895.500" width="20" height="20" fill="#fafafa" stroke="#999"/><path d="M1667 903H1678L1672.500 909z" fill="#000"/>
<g class="n" font-size="13" fill="#1c1c1c">
<text x="1256" y="553">gfx</text><text x="1517" y="553">[table size=18]</text>
<text x="1256" y="573">gfx.a</text><text x="1517" y="573">1</text>
<text x="1256" y="593">gfx.b</text><text x="1517" y="593">1</text>
<text x="1256" y="613">gfx.clear</text><text x="1517" y="613">0</text>
<text x="1256" y="633">gfx.dest</text><text x="1517" y="633">-1</text>
<text x="1256" y="653">gfx.ext_retina</text><text x="1517" y="653">0</text>
<text x="1256" y="673">gfx.g</text><text x="1517" y="673">1</text>
<text x="1256" y="693">gfx.h</text><text x="1517" y="693">0</text>
<text x="1256" y="713">gfx.mode</text><text x="1517" y="713">0</text>
<text x="1256" y="733">gfx.mouse_cap</text><text x="1517" y="733">0</text>
<text x="1256" y="753">gfx.mouse_hwheel</text><text x="1517" y="753">0</text>
<text x="1256" y="773">gfx.mouse_wheel</text><text x="1517" y="773">0</text>
<text x="1256" y="793">gfx.mouse_x</text><text x="1517" y="793">0</text>
<text x="1256" y="813">gfx.mouse_y</text><text x="1517" y="813">0</text>
<text x="1256" y="833">gfx.r</text><text x="1517" y="833">1</text>
<text x="1256" y="853">gfx.texth</text><text x="1517" y="853">8</text>
<text x="1256" y="873">gfx.w</text><text x="1517" y="873">0</text>
<text x="1256" y="893">gfx.x</text><text x="1517" y="893">0</text>
<text x="1256" y="913">gfx.y</text><text x="1517" y="913">0</text>
</g>
<rect x="1250" y="917" width="412" height="17" fill="#fafafa"/>
<path d="M1250 917.500H1662" stroke="#ddd"/>
<path d="M1271.500 917V934M1390.500 917V934M1640.500 917V934M1661.500 917V934" stroke="#999"/>
<path d="M1264 921V931L1258 926z" fill="#000"/><path d="M1648 921V931L1654 926z" fill="#000"/>

<!-- mouse cursor -->
<path d="M1115 298V315L1119 311L1122 318L1125 317L1122 310L1127 310z" fill="#f4f4f4" stroke="#111" stroke-width="1"/>
</svg>
</body></html>
